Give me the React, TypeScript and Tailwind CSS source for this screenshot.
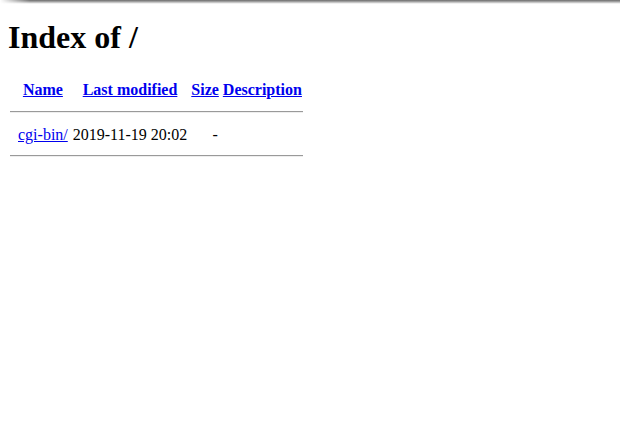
export default function App() {
  const serif = { fontFamily: '"Liberation Serif", "Times New Roman", serif' };
  return (
    <div className="relative min-h-[438px] bg-white text-black" style={serif}>
      <div className="pointer-events-none absolute left-0 right-0 top-0 h-[4px] bg-[linear-gradient(to_bottom,#6b6b6b,#a8a8a8_45%,#e6e6e6_80%,transparent)] [mask-image:linear-gradient(to_right,transparent,black_30px)]" />
      <div className="px-2 pt-[13px]">
        <h1 className="m-0 text-[32px] font-bold leading-normal">Index of /</h1>
        <table className="mt-[14px] border-separate border-spacing-[2px] text-[16px] leading-normal">
          <tbody>
            <tr>
              <th className="w-[5px] p-px align-top"></th>
              <th className="py-px pl-px pr-[2px] text-center font-bold">
                <a href="#" className="text-[#0000ee] underline">Name</a>
              </th>
              <th className="p-px text-center font-bold">
                <a href="#" className="text-[#0000ee] underline">Last modified</a>
              </th>
              <th className="p-px text-center font-bold">
                <a href="#" className="text-[#0000ee] underline">Size</a>
              </th>
              <th className="p-px text-center font-bold">
                <a href="#" className="text-[#0000ee] underline">Description</a>
              </th>
            </tr>
            <tr>
              <th colSpan={5} className="p-0">
                <hr className="mb-[7px] mt-[6px] h-[2px] border-x-0 border-b border-t border-b-[#eeeeee] border-t-[#9a9a9a]" />
              </th>
            </tr>
            <tr>
              <td className="p-px align-top"></td>
              <td className="py-px pl-px pr-[2px]">
                <a href="#" className="text-[#0000ee] underline">cgi-bin/</a>
              </td>
              <td className="p-px text-right">2019-11-19 20:02</td>
              <td className="py-px pl-px pr-[2px] text-right">-</td>
              <td className="p-px">&nbsp;</td>
            </tr>
            <tr>
              <th colSpan={5} className="p-0">
                <hr className="mb-[8px] mt-[5px] h-[2px] border-x-0 border-b border-t border-b-[#eeeeee] border-t-[#9a9a9a]" />
              </th>
            </tr>
          </tbody>
        </table>
      </div>
    </div>
  );
}
